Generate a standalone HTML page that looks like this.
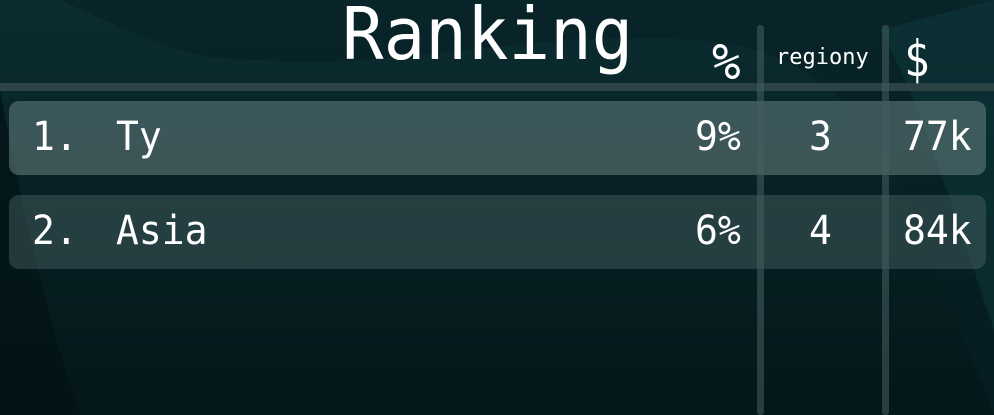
<!DOCTYPE html>
<html><head><style>
body{margin:0;width:994px;height:415px;overflow:hidden;background:linear-gradient(180deg,#0b2d30 0%,#072124 50%,#04171a 100%);font-family:"DejaVu Sans Mono","Liberation Mono",monospace;color:#fff;position:relative}
.a{position:absolute;white-space:pre}
.row{position:absolute;left:9px;width:977px;height:74px;border-radius:10px}
.v{position:absolute;top:25px;bottom:0;width:7px;background:rgba(70,95,97,.55);border-radius:3px}
.n{font-size:38px;transform:scaleY(1.05);transform-origin:left top}
</style></head><body>
<svg class="a" style="left:0;top:0" width="994" height="415">
<path d="M60 0 C150 40 180 60 260 60 C400 70 520 30 700 40 C820 50 880 120 930 250 L994 415 L994 0 Z" fill="#062024" opacity=".6"/>
<path d="M0 90 C20 200 50 330 80 415 L0 415 Z" fill="#031316" opacity=".7"/>
<path d="M880 30 C920 100 950 200 994 330 L994 0 Z" fill="#0e3a3c" opacity=".5"/>
</svg>
<div class="a" style="left:0;top:83px;width:994px;height:8px;background:#2b4345"></div>
<div class="row" style="top:101px;background:rgba(95,120,122,.6)"></div>
<div class="row" style="top:195px;background:rgba(75,100,102,.45)"></div>
<div class="v" style="left:757px"></div>
<div class="v" style="left:882px"></div>
<div class="a" style="left:342px;top:-8px;font-size:72px;transform:scaleX(.96);transform-origin:left top">Ranking</div>
<div class="a" style="left:712px;top:33px;font-size:50px;transform:scaleX(.95);transform-origin:left top">%</div>
<div class="a" style="left:776px;top:45px;font-size:22px">regiony</div>
<div class="a" style="left:904px;top:30px;font-size:50px;transform:scaleX(.85);transform-origin:left top">$</div>
<div class="a n" style="left:32px;top:113px">1.</div>
<div class="a n" style="left:116px;top:113px">Ty</div>
<div class="a n" style="left:32px;top:207px">2.</div>
<div class="a n" style="left:116px;top:207px">Asia</div>
<div class="a n" style="left:695px;top:113px">9%</div>
<div class="a n" style="left:695px;top:207px">6%</div>
<div class="a n" style="left:809px;top:113px">3</div>
<div class="a n" style="left:809px;top:207px">4</div>
<div class="a n" style="left:903px;top:113px">77k</div>
<div class="a n" style="left:903px;top:207px">84k</div>
</body></html>
